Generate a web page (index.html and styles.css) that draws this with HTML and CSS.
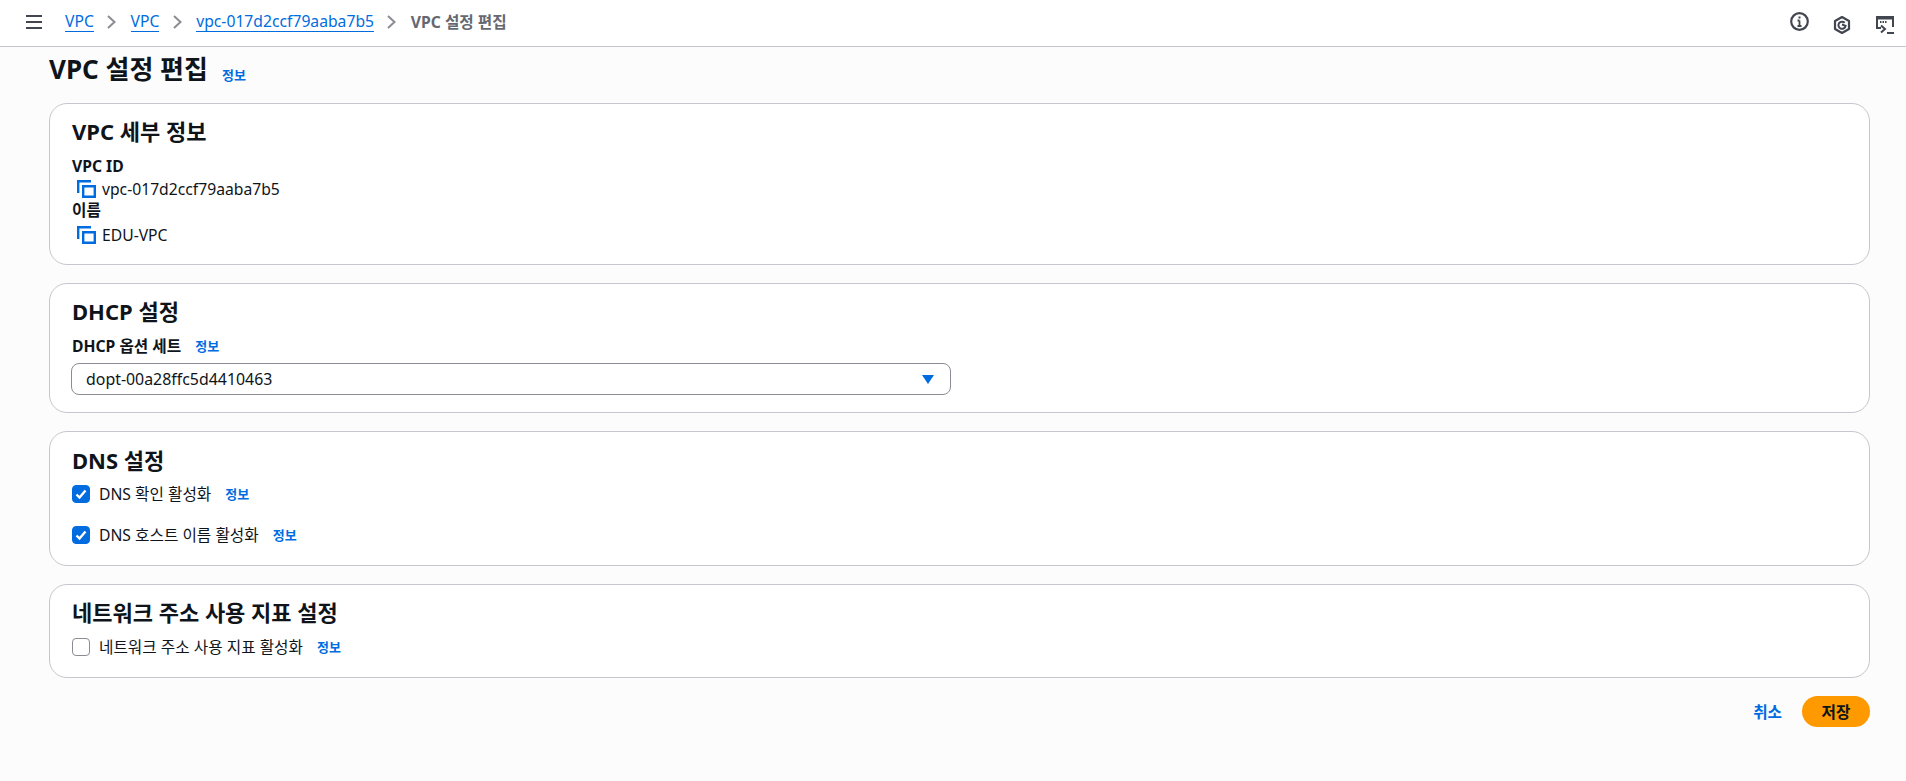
FILE: index.html
```html
<!DOCTYPE html>
<html lang="ko">
<head>
<meta charset="utf-8">
<title>VPC 설정 편집</title>
<link rel="stylesheet" href="styles.css">
</head>
<body>
<header class="topbar">
  <svg class="menu" width="16" height="14" viewBox="0 0 16 14"><path d="M0 1h16M0 7h16M0 13h16" stroke="#424650" stroke-width="2" fill="none"/></svg>
  <nav class="crumbs">
    <a class="crumb">VPC</a>
    <svg class="chev" width="10" height="16" viewBox="0 0 10 16"><path d="M1 2l6.500 6L1 14" stroke="#8c8c94" stroke-width="2" fill="none"/></svg>
    <a class="crumb">VPC</a>
    <svg class="chev" width="10" height="16" viewBox="0 0 10 16"><path d="M1 2l6.500 6L1 14" stroke="#8c8c94" stroke-width="2" fill="none"/></svg>
    <a class="crumb">vpc-017d2ccf79aaba7b5</a>
    <svg class="chev" width="10" height="16" viewBox="0 0 10 16"><path d="M1 2l6.500 6L1 14" stroke="#8c8c94" stroke-width="2" fill="none"/></svg>
    <span class="crumb-now">VPC 설정 편집</span>
  </nav>
  <div class="tools">
    <svg class="tool-info" width="19" height="19" viewBox="0 0 19 19"><circle cx="9.500" cy="9.500" r="8.300" stroke="#424650" stroke-width="2.200" fill="none"/><path d="M9.500 8.500v5.500M7.500 14h4M7.500 8.500h2" stroke="#424650" stroke-width="1.800" fill="none"/><path d="M8.500 4.500h2v2h-2z" fill="#424650"/></svg>
    <svg class="tool-hex" width="18" height="18" viewBox="0 0 18 18"><path d="M9 1l7 4v8l-7 4-7-4V5z" stroke="#424650" stroke-width="2.200" fill="none" stroke-linejoin="round"/><path d="M11.700 6.800A3.600 3.600 0 1 0 12.600 9.800L9 8.500" stroke="#424650" stroke-width="2" fill="none"/></svg>
    <svg class="tool-shell" width="18" height="18" viewBox="0 0 18 18"><path d="M5 12H1V1h16v10" stroke="#424650" stroke-width="2" fill="none"/><path d="M1 2.500h16" stroke="#424650" stroke-width="2" fill="none"/><path d="M4 6h7" stroke="#424650" stroke-width="2" stroke-dasharray="1.500 1" fill="none"/><path d="M5 9.500l4 3.500-4 3.500" stroke="#424650" stroke-width="2" fill="none"/><path d="M11 17h7" stroke="#424650" stroke-width="2" fill="none"/></svg>
  </div>
</header>

<main class="page">
  <div class="page-title">
    <h1>VPC 설정 편집</h1>
    <a class="info">정보</a>
  </div>

  <section class="card card-details">
    <h2>VPC 세부 정보</h2>
    <div class="label">VPC ID</div>
    <div class="value">
      <svg class="copy" width="19" height="18" viewBox="0 0 19 18"><path d="M1.200 13V1.200H14" stroke="#006ce0" stroke-width="2.400" fill="none"/><path d="M6.200 6.200h11.600v10.600H6.200z" stroke="#006ce0" stroke-width="2.400" fill="none"/></svg>
      <span>vpc-017d2ccf79aaba7b5</span>
    </div>
    <div class="label">이름</div>
    <div class="value value-last">
      <svg class="copy" width="19" height="18" viewBox="0 0 19 18"><path d="M1.200 13V1.200H14" stroke="#006ce0" stroke-width="2.400" fill="none"/><path d="M6.200 6.200h11.600v10.600H6.200z" stroke="#006ce0" stroke-width="2.400" fill="none"/></svg>
      <span>EDU-VPC</span>
    </div>
  </section>

  <section class="card card-dhcp">
    <h2>DHCP 설정</h2>
    <div class="label label-row">DHCP 옵션 세트 <a class="info">정보</a></div>
    <div class="select">
      <span>dopt-00a28ffc5d4410463</span>
      <svg width="12" height="9" viewBox="0 0 12 9"><path d="M0 0h12L6 9z" fill="#006ce0"/></svg>
    </div>
  </section>

  <section class="card card-dns">
    <h2>DNS 설정</h2>
    <div class="check-row">
      <span class="box on"><svg width="14" height="14" viewBox="0 0 14 14"><path d="M2.500 7.500l3 3 6-7" stroke="#fff" stroke-width="2.400" fill="none"/></svg></span>
      <span class="check-text">DNS 확인 활성화</span>
      <a class="info">정보</a>
    </div>
    <div class="check-row">
      <span class="box on"><svg width="14" height="14" viewBox="0 0 14 14"><path d="M2.500 7.500l3 3 6-7" stroke="#fff" stroke-width="2.400" fill="none"/></svg></span>
      <span class="check-text">DNS 호스트 이름 활성화</span>
      <a class="info">정보</a>
    </div>
  </section>

  <section class="card card-metrics">
    <h2>네트워크 주소 사용 지표 설정</h2>
    <div class="check-row">
      <span class="box"></span>
      <span class="check-text">네트워크 주소 사용 지표 활성화</span>
      <a class="info">정보</a>
    </div>
  </section>

  <div class="actions">
    <a class="cancel">취소</a>
    <button class="save">저장</button>
  </div>
</main>
</body>
</html>
```

FILE: styles.css
```css
* { box-sizing: border-box; }
html, body { margin: 0; height: 100%; }
body {
  background: #fcfcfc;
  color: #0f141a;
  font-family: "Noto Sans", "Noto Sans CJK KR", sans-serif;
  font-size: 15.700px;
  line-height: 20px;
  overflow: hidden;
}
.topbar {
  height: 47px;
  background: #fff;
  border-bottom: 1px solid #c6c6cd;
  display: flex;
  align-items: center;
  padding: 0 0 3px 26px;
}
.menu { margin-right: 23px; }
.crumbs { display: flex; align-items: center; gap: 13.400px; }
.crumb {
  color: #006ce0;
  border-bottom: 1px solid #006ce0;
  line-height: 20px;
}
.crumb-now { color: #656871; font-weight: 700; }
.tools { margin-left: auto; display: flex; align-items: center; padding-right: 12px; }
.tool-info { margin-right: 24px; }
.tool-hex { margin-right: 25px; margin-top: 7px; }
.tool-shell { margin-top: 6px; }
.page { padding: 0 36px 0 49px; }
.page-title { display: flex; align-items: baseline; gap: 14px; height: 56px; padding-top: 6px; }
h1 { margin: 0; font-size: 26px; line-height: 32px; font-weight: 700; }
.page-title .info { position: relative; top: 1px; }
.info { color: #006ce0; font-size: 13px; font-weight: 700; }
.card {
  background: #fff;
  border: 1px solid #c6c6cd;
  border-radius: 18px;
  padding: 13px 22px 0;
  margin-bottom: 18px;
}
.card-details { height: 162px; }
.card-dhcp { height: 130px; }
.card-dns { height: 135px; }
.card-metrics { height: 94px; }
h2 { margin: 0 0 11px; font-size: 22px; line-height: 28px; font-weight: 700; }
.card-dns { padding-top: 14px; }
.card-dns h2 { margin-bottom: 8px; }
.card-metrics h2 { margin-bottom: 9px; }
.label { font-weight: 700; line-height: 20px; }
.value { display: flex; align-items: center; gap: 6px; padding: 1px 0 0 5px; height: 24px; }
.value-last { margin-top: 2px; }
.label-row { display: flex; align-items: center; gap: 14px; margin-bottom: 7px; }
.select {
  width: 880px;
  height: 32px;
  margin-left: -1px;
  border: 1px solid #8c8c94;
  border-radius: 8px;
  background: #fff;
  display: flex;
  align-items: center;
  justify-content: space-between;
  padding: 0 16px 0 14px;
}
.select span { font-size: 15.900px; }
.check-row { display: flex; align-items: center; height: 24px; margin-bottom: 17px; }
.box {
  width: 18px;
  height: 18px;
  border: 1px solid #8c8c94;
  border-radius: 4px;
  background: #fff;
  display: flex;
  align-items: center;
  justify-content: center;
  margin-right: 9px;
}
.box.on { background: #006ce0; border-color: #006ce0; }
.check-text { margin-right: 14px; color: #0f141a; }
.actions { display: flex; justify-content: flex-end; align-items: center; gap: 20px; }
.cancel { color: #006ce0; font-weight: 700; }
.save {
  width: 68px;
  height: 31px;
  border: 0;
  border-radius: 16px;
  background: #ff9900;
  color: #0f141a;
  font: inherit;
  font-weight: 700;
}
```
